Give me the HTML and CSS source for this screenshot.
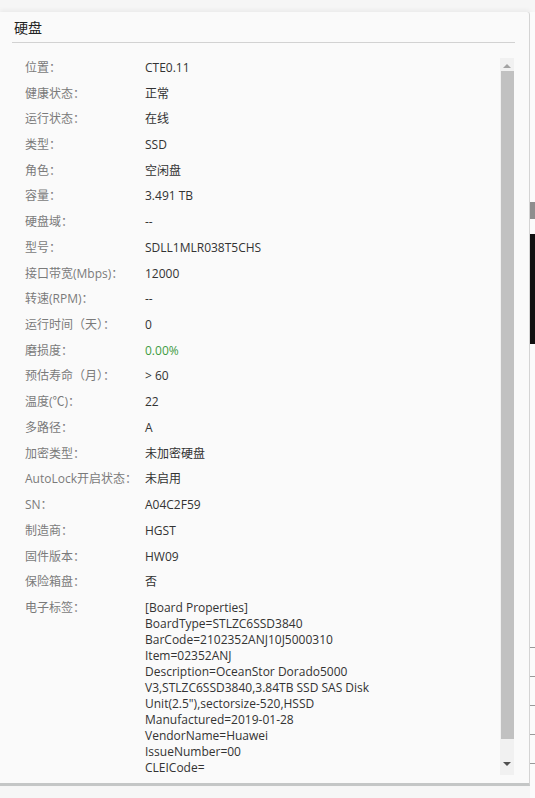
FILE: index.html
```html
<!DOCTYPE html>
<html lang="zh-CN">
<head>
<meta charset="UTF-8">
<title>硬盘</title>
<link rel="stylesheet" href="styles.css">
</head>
<body>

<div class="page">
  <div class="dialog">
    <div class="dialog-title">硬盘</div>

    <div class="dialog-body">
      <div class="props">
        <div class="row"><span class="label">位置：</span><span class="value">CTE0.11</span></div>
        <div class="row"><span class="label">健康状态：</span><span class="value">正常</span></div>
        <div class="row"><span class="label">运行状态：</span><span class="value">在线</span></div>
        <div class="row"><span class="label">类型：</span><span class="value">SSD</span></div>
        <div class="row"><span class="label">角色：</span><span class="value">空闲盘</span></div>
        <div class="row"><span class="label">容量：</span><span class="value">3.491 TB</span></div>
        <div class="row"><span class="label">硬盘域：</span><span class="value">--</span></div>
        <div class="row"><span class="label">型号：</span><span class="value">SDLL1MLR038T5CHS</span></div>
        <div class="row"><span class="label">接口带宽(Mbps)：</span><span class="value">12000</span></div>
        <div class="row"><span class="label">转速(RPM)：</span><span class="value">--</span></div>
        <div class="row"><span class="label">运行时间（天）：</span><span class="value">0</span></div>
        <div class="row"><span class="label">磨损度：</span><span class="value good">0.00%</span></div>
        <div class="row"><span class="label">预估寿命（月）：</span><span class="value">&gt; 60</span></div>
        <div class="row"><span class="label">温度(℃)：</span><span class="value">22</span></div>
        <div class="row"><span class="label">多路径：</span><span class="value">A</span></div>
        <div class="row"><span class="label">加密类型：</span><span class="value">未加密硬盘</span></div>
        <div class="row"><span class="label">AutoLock开启状态：</span><span class="value">未启用</span></div>
        <div class="row"><span class="label">SN：</span><span class="value">A04C2F59</span></div>
        <div class="row"><span class="label">制造商：</span><span class="value">HGST</span></div>
        <div class="row"><span class="label">固件版本：</span><span class="value">HW09</span></div>
        <div class="row"><span class="label">保险箱盘：</span><span class="value">否</span></div>
        <div class="row">
          <span class="label">电子标签：</span>
          <span class="value">[Board Properties]<br>BoardType=STLZC6SSD3840<br>BarCode=2102352ANJ10J5000310<br>Item=02352ANJ<br>Description=OceanStor Dorado5000<br>V3,STLZC6SSD3840,3.84TB SSD SAS Disk<br>Unit(2.5"),sectorsize-520,HSSD<br>Manufactured=2019-01-28<br>VendorName=Huawei<br>IssueNumber=00<br>CLEICode=<br>&nbsp;</span>
        </div>
      </div>

      <div class="scrollbar">
        <div class="arrow up"></div>
        <div class="thumb"></div>
        <div class="arrow down"></div>
      </div>
    </div>
  </div>

  <div class="behind">
    <div class="behind-tab"></div>
    <div class="behind-block"></div>
    <div class="behind-lines"></div>
  </div>
</div>

</body>
</html>
```

FILE: styles.css
```css
body {
  margin: 0;
  background-color: #f6f6f6;
  font-family: "Open Sans", "Noto Sans CJK SC", sans-serif;
  font-size: 12px;
  color: #333;
  overflow: hidden;
}

.page {
  display: flex;
  padding-top: 12px;
  height: 786px;
}

.dialog {
  width: 529px;
  height: 771px;
  flex-shrink: 0;
  background: #fafafa;
  border-right: 1px solid #d4d4d4;
  border-bottom: 3px solid #c4c6c6;
  border-top-right-radius: 3px;
  box-shadow: 0 -2px 4px rgba(0,0,0,0.05);
  display: flex;
  flex-direction: column;
}

.dialog-title {
  margin: 0 14px 0 12px;
  padding: 6px 2px 4px;
  line-height: 20px;
  font-size: 14px;
  color: #222;
  border-bottom: 1px solid #d2d2d2;
}

.dialog-body {
  flex: 1;
  display: flex;
  overflow: hidden;
  padding-top: 12px;
}

.props {
  flex: 1;
  overflow: hidden;
  padding-left: 25px;
}

.row {
  display: flex;
  padding: 4.87px 0;
  line-height: 16px;
}

.label {
  width: 120px;
  flex-shrink: 0;
  color: #7a7a7a;
}

.value {
  color: #333;
}

.value.good {
  color: #3f9a43;
}

.scrollbar {
  width: 14px;
  margin: 3px 15px 8px 0;
  background: #f1f1f1;
  display: flex;
  flex-direction: column;
  align-items: center;
}

.thumb {
  flex: 1;
  width: 13px;
  background: #c1c1c1;
}

.arrow {
  height: 11px;
  width: 14px;
  display: flex;
  align-items: center;
  justify-content: center;
}

.arrow::after {
  content: "";
  border-left: 4px solid transparent;
  border-right: 4px solid transparent;
}

.arrow.up {
  padding-top: 2px;
}

.arrow.up::after {
  border-bottom: 4px solid #a3a3a3;
}

.arrow.down {
  height: 36px;
  padding-top: 14px;
  box-sizing: border-box;
}

.arrow.down::after {
  border-top: 4px solid #505050;
}

.behind {
  flex: 1;
  display: flex;
  flex-direction: column;
  background: #fbfbfb;
}

.behind-tab {
  height: 17px;
  margin-top: 190px;
  background: #8e8e8e;
}

.behind-block {
  height: 110px;
  margin-top: 15px;
  background: #111;
}

.behind-lines {
  height: 170px;
  margin-top: 275px;
  background: repeating-linear-gradient(#fbfbfb 0, #fbfbfb 28px, #999 28px, #999 29px);
}
```
